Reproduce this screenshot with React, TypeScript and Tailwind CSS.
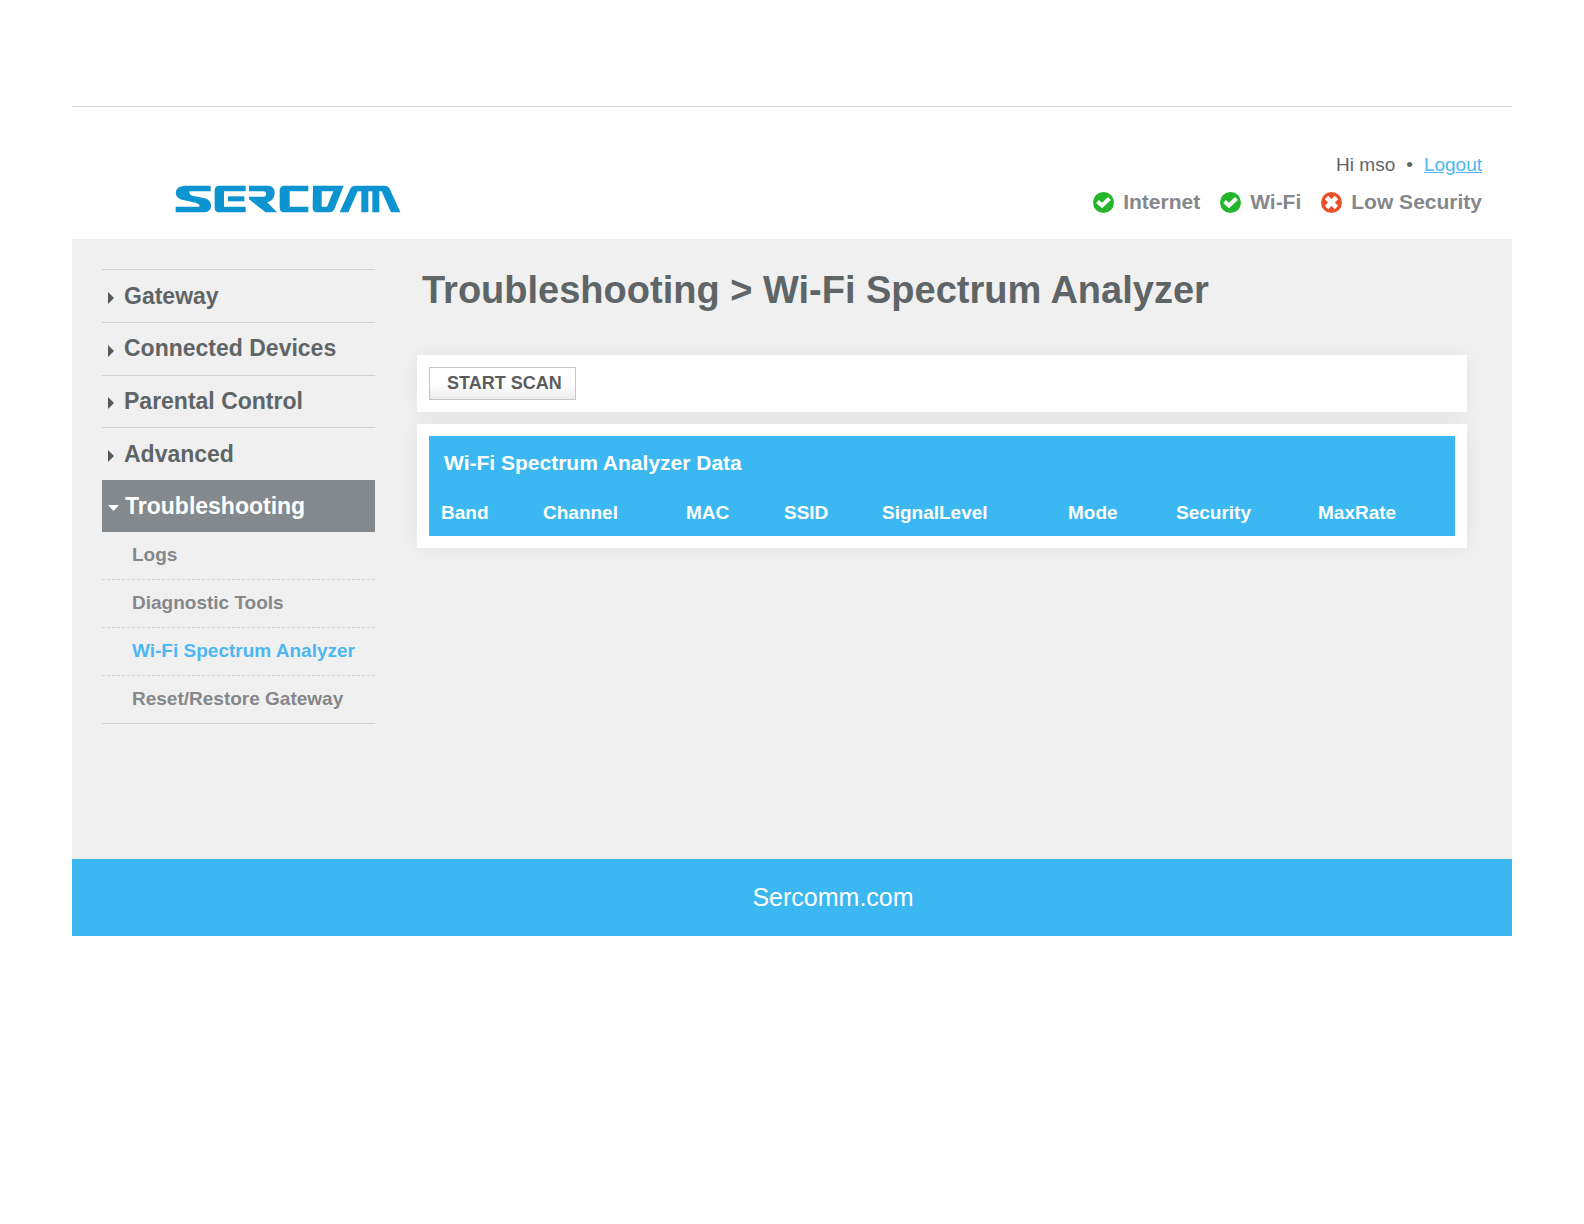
const MENU = ["Gateway", "Connected Devices", "Parental Control", "Advanced"];

const SUB_MENU = [
  { label: "Logs" },
  { label: "Diagnostic Tools" },
  { label: "Wi-Fi Spectrum Analyzer", current: true },
  { label: "Reset/Restore Gateway" },
];

const STATUS = [
  { label: "Internet", ok: true },
  { label: "Wi-Fi", ok: true },
  { label: "Low Security", ok: false },
];

const COLUMNS = [
  { label: "Band", width: "w-[102px]" },
  { label: "Channel", width: "w-[143px]" },
  { label: "MAC", width: "w-[98px]" },
  { label: "SSID", width: "w-[98px]" },
  { label: "SignalLevel", width: "w-[186px]" },
  { label: "Mode", width: "w-[108px]" },
  { label: "Security", width: "w-[142px]" },
  { label: "MaxRate", width: "w-[149px]" },
];

function Logo() {
  return (
    <svg
      className="w-[226px] h-7"
      viewBox="46 45 678 84"
      role="img"
      aria-label="Sercomm"
      fill="#0b94cf"
    >
      <path d="M153 47H78C52 47 45 64 50 76C54 86 64 89 74 91L110 99Q122 103 119 110H48V127H134C152 127 158 110 152 98C148 88 140 86 132 84L98 77Q86 73 90 64H153Z" />
      <path d="M180 47H258V64H193V110H258V127H180Q165 127 165 113V61Q165 47 180 47Z" />
      <path d="M205 79H254V94H205Z" />
      <path d="M268 47H326C352 47 352 92 322 96L352 127H318L268 88V80H312C322 80 322 64 312 64H268Z" />
      <path d="M375 47H446V64H390V110H446V127H375Q360 127 360 113V61Q360 47 375 47Z" />
      <path
        fillRule="evenodd"
        d="M460 47H552L524 118Q520 127 510 127H474Q459 127 459 113ZM486 64V110H502L521 64Z"
      />
      <path d="M540 127L572 56Q577 47 588 47H674Q685 47 690 56L722 127H694L666 64H659V127H638V64H626V127H605V64H594L566 127Z" />
    </svg>
  );
}

function StatusIcon({ ok }: { ok: boolean }) {
  return (
    <svg className="size-[21px]" viewBox="0 0 21 21" fill="none" aria-hidden>
      <circle cx="10.5" cy="10.5" r="10.5" fill={ok ? "#23b52b" : "#e8502c"} />
      {ok ? (
        <path d="M4.5 9.5L9 13.5L16.5 6.5" stroke="#fff" strokeWidth="4" />
      ) : (
        <path d="M5.5 5.5L15.5 15.5M15.5 5.5L5.5 15.5" stroke="#fff" strokeWidth="4.6" />
      )}
    </svg>
  );
}

function Header() {
  return (
    <header className="flex justify-between border-t border-[#d9d9d9] h-[133px] pl-[103px] pr-[30px]">
      <div className="pt-[78px]">
        <Logo />
      </div>
      <div className="flex flex-col items-end pt-[46px]">
        <p className="flex gap-[11px] text-[19px] leading-6 text-[#5f6567]">
          <span>Hi mso</span>
          <span>•</span>
          <a href="#logout" className="text-[#4db7f0] underline">
            Logout
          </a>
        </p>
        <ul className="flex gap-5 mt-[11px] text-[21px] leading-7 font-bold text-[#85878a]">
          {STATUS.map((item) => (
            <li key={item.label} className="flex items-center gap-[9px]">
              <StatusIcon ok={item.ok} />
              {item.label}
            </li>
          ))}
        </ul>
      </div>
    </header>
  );
}

function Sidebar() {
  return (
    <nav className="w-[273px] shrink-0 font-bold" aria-label="Main">
      <ul className="grid grid-rows-4 h-[211px] text-[23px] text-[#5f6567]">
        {MENU.map((label) => (
          <li key={label} className="border-t border-[#d2d2d2]">
            <a href="#menu" className="flex items-center h-full gap-[10px] pl-[6px]">
              <svg className="w-[6px] h-3 mt-1" viewBox="0 0 6 12" fill="#55595b" aria-hidden>
                <path d="M0 0L6 6L0 12Z" />
              </svg>
              {label}
            </a>
          </li>
        ))}
      </ul>
      <a
        href="#troubleshooting"
        className="flex items-center gap-[6px] h-[52px] pl-[6px] bg-[#83898d] text-[23px] text-white"
      >
        <svg className="w-[11px] h-[6px] mt-1" viewBox="0 0 11 6" fill="#fff" aria-hidden>
          <path d="M0 0H11L5.5 6Z" />
        </svg>
        Troubleshooting
      </a>
      <ul className="text-[19px] text-[#85878a]">
        {SUB_MENU.map((item) => (
          <li
            key={item.label}
            className="h-12 border-b border-dashed border-[#d2d2d2] last:border-solid"
          >
            <a
              href="#page"
              aria-current={item.current ? "page" : undefined}
              className="flex items-center h-full pl-[30px] aria-[current=page]:text-[#4db7f0]"
            >
              {item.label}
            </a>
          </li>
        ))}
      </ul>
    </nav>
  );
}

export default function App() {
  return (
    <div className="min-h-screen bg-white px-[72px] pt-[106px] font-['Liberation_Sans',Arial,sans-serif]">
      <Header />
      <div className="flex min-h-[620px] gap-[42px] bg-[#f0f0f0] pl-[30px] pr-[45px] pt-[30px]">
        <Sidebar />
        <main className="flex-1">
          <h1 className="pl-[5px] text-[38px] leading-[42px] font-bold text-[#5f6567]">
            Troubleshooting &gt; Wi-Fi Spectrum Analyzer
          </h1>
          <div className="mt-11 bg-white p-3 shadow-[0_0_20px_rgba(0,0,0,0.06)]">
            <button
              type="button"
              className="block h-[33px] pl-[17px] pr-[13px] pb-[2px] border border-[#c4c4c4] bg-linear-to-b from-white from-50% to-[#ececec] text-[18px] leading-6 font-bold text-[#5c5c5c]"
            >
              START SCAN
            </button>
          </div>
          <div className="mt-3 bg-white p-3 shadow-[0_0_20px_rgba(0,0,0,0.06)]">
            <table className="table-fixed w-full bg-[#3bb8f1] text-left text-white">
              <caption className="h-[54px] bg-[#3bb8f1] px-[15px] text-left text-[21px] leading-[54px] font-bold">
                Wi-Fi Spectrum Analyzer Data
              </caption>
              <thead>
                <tr className="h-[46px]">
                  {COLUMNS.map((col) => (
                    <th
                      key={col.label}
                      scope="col"
                      className={`${col.width} px-3 text-[19px] leading-6 font-bold`}
                    >
                      {col.label}
                    </th>
                  ))}
                </tr>
              </thead>
            </table>
          </div>
        </main>
      </div>
      <footer className="flex items-center justify-center h-[77px] pl-[82px] bg-[#3bb8f1] text-[25px] text-white">
        <a href="#sercomm">Sercomm.com</a>
      </footer>
    </div>
  );
}
